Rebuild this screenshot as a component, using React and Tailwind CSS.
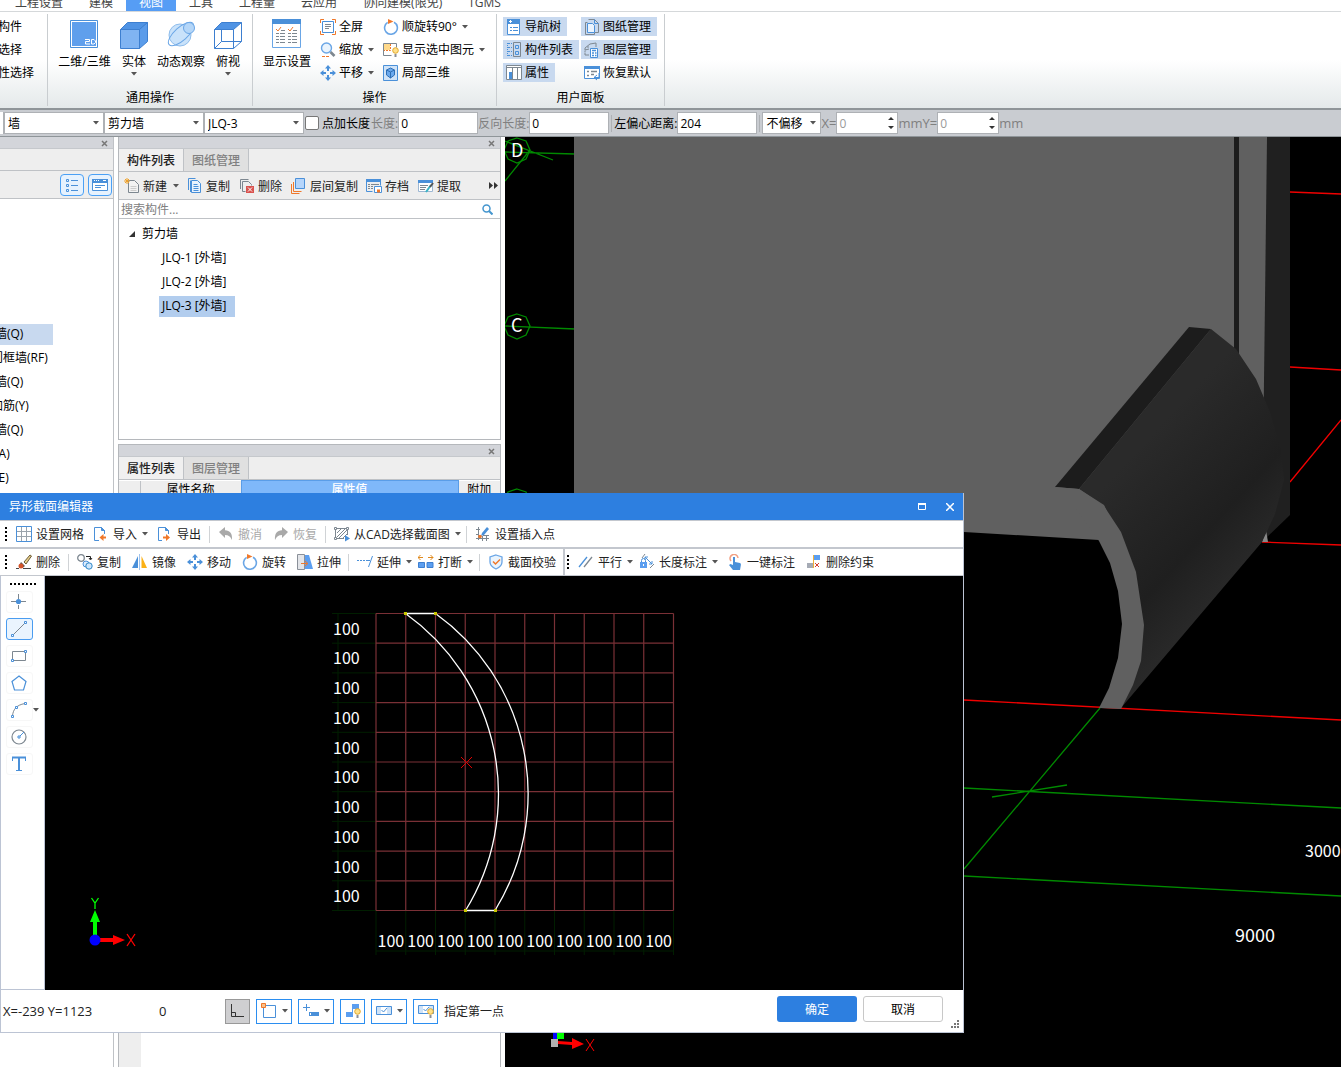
import React, { useState } from 'react';

const BLUE = '#4a90d9';
const GRAY = '#7d8790';
const ORANGE = '#f0782a';

const menuTabs = ['工程设置', '建模', '视图', '工具', '工程量', '云应用', '协同建模(限免)', 'TGMS'];

const navItems = [
  { text: '墙(Q)', shift: '-ml-[5px]', active: true },
  { text: '门框墙(RF)', shift: '-ml-[9px]' },
  { text: '墙(Q)', shift: '-ml-[5px]' },
  { text: '加筋(Y)', shift: '-ml-[9px]' },
  { text: '墙(Q)', shift: '-ml-[5px]' },
  { text: '(A)', shift: '-ml-[5px]' },
  { text: '(E)', shift: '-ml-[5px]' },
];

const Svg = ({ children }) => (
  <svg width="16" height="16" viewBox="0 0 16 16" fill="none" className="shrink-0">
    {children}
  </svg>
);

const Arrow = () => (
  <svg width="6" height="4" viewBox="0 0 6 4" className="shrink-0">
    <path d="M0 0h6L3 3.5z" fill="#555" />
  </svg>
);

const BulbShape = () => (
  <>
    <circle cx="12.5" cy="8.5" r="2.8" fill="#ffe08a" stroke="#e0a82e" />
    <path d="M11.5 12h2v3h-2z" fill="#8a8f98" />
  </>
);

const icons = {
  full: (
    <Svg>
      <path d="M.5 4V.5H4M12 .5h3.5V4M15.5 12v3.5H12M4 15.5H.5V12" stroke={ORANGE} />
      <path d="M2.5 2.5h11v11h-11z" stroke={BLUE} />
      <path d="M5 5.5h6M5 7.5h6M5 9.5h4" stroke={GRAY} />
    </Svg>
  ),
  zoom: (
    <Svg>
      <circle cx="6.5" cy="6" r="5" fill="#eaf4fd" stroke="#6aa6e6" strokeWidth="1.4" />
      <path d="M10.5 10l4 4" stroke={GRAY} strokeWidth="2.6" />
      <path d="M2 14.5h7" stroke={ORANGE} strokeDasharray="3 1" />
    </Svg>
  ),
  move: (
    <Svg>
      <path d="M8 3v3M8 10v3M3 8h3M10 8h3" stroke={BLUE} strokeWidth="2" />
      <path d="M8 0l3 3.5H5zM8 16l3-3.5H5zM0 8l3.5-3v6zM16 8l-3.5-3v6z" fill={BLUE} />
    </Svg>
  ),
  rotate: (
    <Svg>
      <path d="M11 3.2A6.4 6.4 0 1 1 4.6 3.4" stroke="#6aa6e6" strokeWidth="1.6" />
      <path d="M5 0l5.5 2.5L5 5z" fill={ORANGE} />
    </Svg>
  ),
  showSel: (
    <Svg>
      <path d="M.5 1.5h13v4M.5 1.5v12h8" stroke={GRAY} />
      <path d="M1 2h6v6H1z" fill="#ffd98a" />
      <path d="M7.5 2v6.5H1" stroke={ORANGE} strokeDasharray="2 1" />
      <BulbShape />
    </Svg>
  ),
  local3d: (
    <Svg>
      <path d="M.5.5h14v15H.5z" fill="#cfe3f8" stroke={BLUE} />
      <path d="M7.5 3l4 2v5l-4 3-4-3V5z" fill="#6aa9ee" stroke="#2f6fb5" />
      <path d="M3.5 5l4 2 4-2M7.5 7v6" stroke="#2f6fb5" />
    </Svg>
  ),
  navTree: (
    <Svg>
      <path d="M1.5.5h12v15h-12z" fill="#fff" stroke={BLUE} />
      <path d="M1 0h13v5H1z" fill={BLUE} />
      <path d="M3 2.5h3M4.5 1v3" stroke="#fff" />
      <path d="M4 8.5h2M7 8.5h5M4 11.5h2M7 11.5h5" stroke={BLUE} />
    </Svg>
  ),
  compList: (
    <Svg>
      <path d="M1.5 1v13" stroke={BLUE} strokeDasharray="1 1" />
      <path d="M2 1.5h4M2 5.5h4M2 9.5h4M2 13.5h4" stroke={BLUE} strokeDasharray="2 1" />
      <path d="M7.5.5h7v14h-7z" stroke={GRAY} />
      <path d="M9.5 3.5h3v3h-3zM9.5 9.5h3v3h-3z" stroke={BLUE} />
    </Svg>
  ),
  props: (
    <Svg>
      <path d="M.5.5h15v14H.5z" fill="#fff" stroke={GRAY} />
      <path d="M1 2.5h14M6.5 2v12M11.5 2v12" stroke={GRAY} />
      <path d="M3 7h3v7H3z" fill={BLUE} />
    </Svg>
  ),
  sheets: (
    <Svg>
      <path d="M3.5 3.5h-2v12h9v-2" stroke={GRAY} />
      <path d="M4.5.5h6l4 4v9h-4" stroke={GRAY} />
      <path d="M10.5.5v4h4" stroke={BLUE} />
      <path d="M3.500 4.5h5l2 2v7h-7z" fill="#eaf3fd" stroke={BLUE} />
    </Svg>
  ),
  layers: (
    <Svg>
      <path d="M1 6l5-4 6-1v4M1 6v2l4-1M1 11v2h4M1 8.500v2M4 4v2" stroke={GRAY} />
      <path d="M6.5 6.5h7v9h-7z" fill="#fff" stroke={BLUE} />
      <path d="M8 8.5h4M8 11h2M11 11h1.5M8 13.5h2M11 13.5h1.5" stroke={BLUE} strokeWidth="1.4" />
    </Svg>
  ),
  restore: (
    <Svg>
      <path d="M.5 1.5h15v12H.5z" fill="#fff" stroke={BLUE} />
      <path d="M0 1h16v3H0z" fill={BLUE} />
      <path d="M3 6.5h2M3 10.5h2M7 6.5h6M7 9.5h3" stroke={GRAY} strokeWidth="1.5" />
      <path d="M10 12.500h5V8M10 12.5l3-2.5M10 12.5l3 2.5" stroke={BLUE} />
    </Svg>
  ),
  create: (
    <Svg>
      <path d="M4.5 2.5h6l4 4v8h-10z" fill="#f3f3f3" stroke={GRAY} />
      <path d="M6.5 8.5h6M6.5 10.5h6M6.5 12.5h6" stroke="#ccc" />
      <path d="M1 1l4 4M5 1L1 5M3 0v6M0 3h6" stroke="#f0a22a" />
    </Svg>
  ),
  copyDoc: (
    <Svg>
      <path d="M1.5 12V.5h7M3.5 14V2.5" stroke={BLUE} />
      <path d="M4.5 2.5h6l3 3v9h-9z" fill="#eaf3fd" stroke={BLUE} />
      <path d="M6.5 6.5h4M6.5 8.5h5M6.5 10.5h5M6.5 12.5h5" stroke={BLUE} />
    </Svg>
  ),
  deleteDoc: (
    <Svg>
      <path d="M1.5 11V1.5h8M3.5 13.5v-10h6l3 3v1M3.5 13.5h3" stroke={GRAY} />
      <path d="M7 8h8v7H7z" fill="#d9534f" />
      <path d="M9 9.5l4 4M13 9.5l-4 4" stroke="#fff" />
    </Svg>
  ),
  floorCopy: (
    <Svg>
      <path d="M.5 6v9.500h8" stroke={ORANGE} />
      <path d="M2.5 4v9.500h8" stroke={ORANGE} />
      <path d="M4.500.5h9v10h-9z" fill="#b5d5fb" stroke={BLUE} />
    </Svg>
  ),
  archive: (
    <Svg>
      <path d="M.5 1.5h14v6M.5 1.5v12h6" stroke={BLUE} />
      <path d="M0 1h15v3H0z" fill={BLUE} />
      <path d="M2 6.5h2M5 6.5h8M2 8.5h2M5 8.5h2M2 10.5h2M5 10.5h2" stroke={GRAY} />
      <path d="M8.5 8.5h7v6h-7z" fill="#fff" stroke={BLUE} />
      <path d="M11 11.5h3v3h-3z" fill={ORANGE} />
    </Svg>
  ),
  extract: (
    <Svg>
      <path d="M.5 2.5h14v11H.5z" fill="#fff" stroke="#9db7d3" />
      <path d="M0 2h15v3H0z" fill={BLUE} />
      <path d="M2 7.5h8M2 9.5h6M2 11.5h5" stroke={GRAY} />
      <path d="M8 14l5-7" stroke="#3bb3c4" strokeWidth="2" />
      <path d="M12 9l3-4" stroke="#555" strokeWidth="2" />
    </Svg>
  ),
  grid: (
    <Svg>
      <path d="M5.5 0v16M10.5 0v16M0 5.5h16M0 10.5h16" stroke="#9aa3ab" />
      <path d="M.5.5h15v15H.5z" stroke={BLUE} />
    </Svg>
  ),
  importDoc: (
    <Svg>
      <path d="M6 14.5H1.5v-13h7l3 3V8" stroke={BLUE} />
      <path d="M8.5 1.500v3h3z" fill={BLUE} stroke={BLUE} />
      <path d="M13 11.5H9" stroke={ORANGE} strokeWidth="2" />
      <path d="M6.5 11.5l4-3.500v7z" fill={ORANGE} />
    </Svg>
  ),
  exportDoc: (
    <Svg>
      <path d="M5 14.5H1.5v-13h7l3 3V8" stroke={BLUE} />
      <path d="M8.5 1.500v3h3z" fill={BLUE} stroke={BLUE} />
      <path d="M6 11.5h4" stroke={ORANGE} strokeWidth="2" />
      <path d="M13 11.5L9 8v7z" fill={ORANGE} />
    </Svg>
  ),
  undo: (
    <Svg>
      <path d="M1 6l6-5v3.2c5 .3 7.5 3 7 9.8-1.500-3.500-3.500-5-7-5v3z" fill="#a9a9a9" />
    </Svg>
  ),
  redo: (
    <Svg>
      <path d="M15 6L9 1v3.2C4 4.5 1.500 7.2 2 14c1.500-3.500 3.500-5 7-5v3z" fill="#a9a9a9" />
    </Svg>
  ),
  cad: (
    <Svg>
      <path d="M2 2.5h11M1.5 3v9M13.500 3v6M2 12.5h8" stroke={GRAY} />
      <path d="M3 7l4-4M3 11l8-8M5 12l8-8M9 12l4-4" stroke={GRAY} />
      <path d="M.5 1.5h2v2h-2zM12.5 1.5h2v2h-2zM.5 11.5h2v2h-2z" fill="#fff" stroke={GRAY} />
      <path d="M11 9l5 3.5-5 3z" fill={BLUE} />
    </Svg>
  ),
  insertPt: (
    <Svg>
      <path d="M3.5 1v13M1 3.5h4M1 8.5h3M1 12.5h13M7.5 10v5M11.5 9v6M8 9.5h6" stroke={GRAY} />
      <path d="M7 7l5-6 2 2-5 6-3 1z" fill={BLUE} />
      <circle cx="5" cy="10.5" r="1.8" fill={ORANGE} />
    </Svg>
  ),
  brush: (
    <Svg>
      <path d="M8 8l6-7 1.5 1L10 10z" fill="#e8cf8a" stroke="#6b5a36" />
      <path d="M5 8l4 4-2 1.500L4 10z" fill="#555" />
      <circle cx="5" cy="12" r="2.5" fill="#d4542a" />
      <path d="M0 14.5h3M7 14.5h8" stroke="#444" />
    </Svg>
  ),
  copyShape: (
    <Svg>
      <circle cx="4" cy="4" r="3.3" stroke={GRAY} strokeWidth="1.3" />
      <path d="M9 2.5h4.5V5M12 4l1.500 2L15 4" stroke="#222" />
      <circle cx="9" cy="10" r="3" fill="#dcecfc" stroke={BLUE} />
      <circle cx="12" cy="12" r="3.200" fill="#cfe6fb" stroke="#2f88c8" />
    </Svg>
  ),
  mirror: (
    <Svg>
      <path d="M6 2v12H0z" fill={BLUE} />
      <path d="M9.5 2v12H15z" fill="#fbb116" />
      <path d="M7.5 0v16" stroke="#9fc4ee" />
    </Svg>
  ),
  stretch: (
    <Svg>
      <path d="M.5.5h7v15h-7z" fill="#e3e5e9" stroke="#8a9099" />
      <path d="M8 1h4l4 14H8z" fill="#5b9ef0" />
      <path d="M4 9.5h6M8 7l3 2.5L8 12" stroke={ORANGE} />
    </Svg>
  ),
  extend: (
    <Svg>
      <path d="M0 6.5h10" stroke={BLUE} strokeDasharray="2 1" />
      <path d="M10 6.5h3M15.5 2l-4 11" stroke={BLUE} />
    </Svg>
  ),
  breakIt: (
    <Svg>
      <path d="M.5 8.500h6v5h-6zM9 8.500h6v5H9z" fill="#5b9ef0" stroke="#3d7fd0" />
      <path d="M0 3.5h5M10 3.5h5M2.5 1L0 3.5 2.5 6M12.5 1L15 3.5 12.5 6" stroke="#e08a1e" />
    </Svg>
  ),
  shield: (
    <Svg>
      <path d="M8 1l6 2v5c0 3.5-2.500 5.500-6 7-3.500-1.500-6-3.500-6-7V3z" fill="#eaf4fd" stroke="#6aa6e6" strokeWidth="1.3" />
      <path d="M5 7.5L7.5 10 12 5.5" stroke={ORANGE} strokeWidth="1.5" />
    </Svg>
  ),
  parallel: (
    <Svg>
      <path d="M1 13L9 3" stroke={BLUE} strokeWidth="1.3" />
      <path d="M6 13l8-10" stroke={GRAY} strokeWidth="1.3" />
    </Svg>
  ),
  lockDim: (
    <Svg>
      <path d="M2.5 8V6.500a1.500 1.500 0 0 1 4 0V8" stroke={BLUE} />
      <path d="M1 8h7v6H1z" fill="#5b9ef0" />
      <path d="M4.5 10v2" stroke="#fff" />
      <path d="M6 3l7 7M6 3v3M6 3h3M13 10V7M13 10h-3" stroke={BLUE} />
      <path d="M3 4l3-4M11 14l4-4" stroke={GRAY} />
    </Svg>
  ),
  touch: (
    <Svg>
      <path d="M4 7a4 4 0 1 1 7-3" stroke="#f2a184" strokeWidth="1.5" />
      <path d="M6 3h2v5l5 1c1 .5 1 1 .8 2.5L13 16H6l-4-5 1.500-1L6 11z" fill={BLUE} />
    </Svg>
  ),
  delCons: (
    <Svg>
      <path d="M7 1h7v5H7z" fill="#5b9ef0" />
      <path d="M1 9h6v5H1z" fill="#a6abb5" />
      <path d="M7.5 1v13" stroke="#f0b03a" />
      <path d="M9 9l4 4M13 9l-4 4" stroke="#d83a2a" />
    </Svg>
  ),
};

const drawTools = [
  {
    id: '点',
    icon: (
      <>
        <path d="M7.500 0v5M7.500 11v4M0 7.500h5M10 7.500h5" stroke={GRAY} />
        <circle cx="7.500" cy="7.500" r="2.6" fill={BLUE} />
      </>
    ),
  },
  {
    id: '直线',
    icon: (
      <>
        <path d="M2 14L14 2" stroke={GRAY} />
        <path d="M.5 13.5h2v2h-2zM13.5.5h2v2h-2z" fill="#fff" stroke={BLUE} />
      </>
    ),
  },
  {
    id: '矩形',
    icon: (
      <>
        <path d="M1.5 3.5h13v9h-13z" stroke={GRAY} />
        <path d="M.5 11.5h2v2h-2zM13.5 2.5h2v2h-2z" fill="#fff" stroke={BLUE} />
      </>
    ),
  },
  { id: '多边形', icon: <path d="M8 1l7 5.5-2.500 8.500h-9L1 6.5z" stroke={BLUE} strokeWidth="1.2" /> },
  {
    id: '弧',
    arrow: true,
    icon: (
      <>
        <path d="M1.5 14C2 8 5 3 14 1.5" stroke={GRAY} />
        <path d="M.5 13.5h2v2h-2zM13.5.5h2v2h-2zM4.5 4.5h2v2h-2z" fill="#fff" stroke={BLUE} />
      </>
    ),
  },
  {
    id: '圆',
    icon: (
      <>
        <circle cx="8" cy="8" r="7" stroke={GRAY} strokeWidth="1.2" />
        <path d="M8 8l5-5" stroke={BLUE} />
        <path d="M7 7h2v2H7z" fill="#fff" stroke={BLUE} />
      </>
    ),
  },
  {
    id: '文字',
    icon: (
      <>
        <path d="M1.5 5V1.5h13V5M5 14.5h6" stroke={BLUE} />
        <path d="M1 1.5h14M8 1.5v13" stroke={BLUE} strokeWidth="2" />
      </>
    ),
  },
];

const BigButton = ({ label, width, arrow, children }) => (
  <button className={`flex flex-col items-center ${width}`}>
    <svg width="34" height="34" viewBox="0 0 34 34" fill="none">{children}</svg>
    <span className="mt-[3px] leading-4 whitespace-nowrap">{label}</span>
    {arrow && <span className="mt-[2px]"><Arrow /></span>}
  </button>
);

const RibbonItem = ({ icon, label, arrow, active, pad = 'pl-1' }) => (
  <button className={`flex items-center h-[19px] gap-[3px] whitespace-nowrap ${pad} ${active ? 'bg-[#c8d9ef] pr-[6px]' : ''}`}>
    {icons[icon]}
    <span>{label}</span>
    {arrow && <span className="ml-[2px]"><Arrow /></span>}
  </button>
);

const RibbonGroup = ({ label, width, children }) => (
  <div className={`flex flex-col justify-between border-r border-[#c9cdd0] my-[2px] ${width}`}>
    <div className="flex pt-[3px]">{children}</div>
    <div className="h-4 text-center leading-4">{label}</div>
  </div>
);

const Combo = ({ value, width, label }) => (
  <div className={`relative h-[22px] ${width}`}>
    <select
      aria-label={label}
      className="appearance-none w-full h-full bg-white border border-[#aeb1b5] pl-[3px] pt-[2px] outline-none leading-4"
    >
      <option>{value}</option>
    </select>
    <div className="absolute right-[5px] top-[9px] pointer-events-none"><Arrow /></div>
  </div>
);

const Field = ({ label, value, dim }) => (
  <label className={`flex items-center ${dim ? 'text-[#808080]' : 'text-black'}`}>
    <span className="whitespace-nowrap pt-[2px]">{label}</span>
    <input
      type="text"
      defaultValue={value}
      className="w-20 h-[22px] bg-white border border-[#aeb1b5] pl-[2px] text-black outline-none"
    />
  </label>
);

const Spin = ({ label, value }) => (
  <label className="flex items-center text-[#808080]">
    <span className="whitespace-nowrap text-[13px] pt-[2px]">{label}</span>
    <span className="relative">
      <input
        type="text"
        defaultValue={value}
        className="block w-[62px] h-[22px] bg-white border border-[#aeb1b5] pl-[2px] text-[#9a9a9a] outline-none"
      />
      <svg width="6" height="14" viewBox="0 0 6 14" className="absolute right-1 top-1">
        <path d="M0 4h6L3 1zM0 10h6l-3 3z" fill="#333" />
      </svg>
    </span>
  </label>
);

const PanelHead = () => (
  <div className="h-3 bg-[#d3d5da] border-b border-[#c5c8cc] flex justify-end items-end pr-[5px] pb-[1px]">
    <button aria-label="关闭">
      <svg width="7" height="7" viewBox="0 0 7 7" className="block">
        <path d="M1 1l5 5M6 1L1 6" stroke="#777" strokeWidth="1.5" />
      </svg>
    </button>
  </div>
);

const PanelTabs = ({ tabs }) => (
  <div className="flex h-[23px] border-b border-[#bfc2c6] bg-[#eeeeee]">
    {tabs.map((t, i) => (
      <button
        key={t}
        className={`w-[65px] pt-[2px] border-r border-[#bfc2c6] font-medium ${i === 0 ? 'bg-[#f0f0f0] text-[#222]' : 'bg-[#e0e0e0] text-[#808080]'}`}
      >
        {t}
      </button>
    ))}
  </div>
);

const PanelTool = ({ icon, label, arrow, width }) => (
  <button className={`flex items-center gap-[3px] whitespace-nowrap shrink-0 text-[#222] ${width}`}>
    {icons[icon]}
    <span className="pt-[2px]">{label}</span>
    {arrow && <span className="ml-[3px]"><Arrow /></span>}
  </button>
);

const Tool = ({ icon, label, arrow, disabled, width }) => (
  <button
    disabled={disabled}
    className={`flex items-center gap-1 whitespace-nowrap shrink-0 h-full ${width} ${disabled ? 'text-[#a9a9a9]' : 'text-[#222]'}`}
  >
    {icons[icon]}
    <span className="pt-[2px]">{label}</span>
    {arrow && <span className="ml-[1px]"><Arrow /></span>}
  </button>
);

const Sep = () => (
  <div className="w-[9px] shrink-0 h-[17px]"><div className="w-px h-full bg-[#d0d3d6]" /></div>
);

const Grip = () => <div className="h-[14px] border-l-2 border-dotted border-black shrink-0 w-[11px]" />;

const Ribbon = () => (
  <header className="shrink-0">
    <nav className="flex items-end h-3 overflow-hidden bg-white pl-[2px] border-b border-[#d5d8da]">
      {menuTabs.map((t) => (
        <button
          key={t}
          className={`px-[13px] h-4 leading-4 whitespace-nowrap ${t === '视图' ? 'bg-[#569df5] text-white' : 'text-[#444]'}`}
        >
          {t}
        </button>
      ))}
    </nav>
    <div className="flex h-[98px] bg-linear-to-b from-white from-50% to-[#e4e9ea] border-b-2 border-[#8f9599]">
      <RibbonGroup width="w-12">
        <div className="flex flex-col gap-1 -ml-[2px]">
          {['构件', '选择', '性选择'].map((t) => (
            <button key={t} className="h-[19px] text-left whitespace-nowrap">{t}</button>
          ))}
        </div>
      </RibbonGroup>
      <RibbonGroup label="通用操作" width="w-[205px]">
        <div className="flex pl-2 items-start">
          <BigButton label="二维/三维" width="w-[57px]">
            <path d="M2.5 3.5h27v27h-27z" fill="#fff" stroke={BLUE} />
            <path d="M4 5h24v24H4z" fill="#5f9fec" />
            <path d="M17 22.500h4.500v2H17.500V27H22M23.500 22.500V27h2.500l1.500-1.500V24L26 22.500z" stroke="#fff" />
          </BigButton>
          <BigButton label="实体" arrow width="w-[42px]">
            <path d="M3.5 12.5h19v19h-19z" fill="#80b4f2" stroke="#3d7fd0" />
            <path d="M3.5 12.5l7-7h20l-8 7z" fill="#4f93e4" stroke="#3d7fd0" />
            <path d="M22.5 12.5l8-7v19l-8 7z" fill="#5b9cea" stroke="#3d7fd0" />
          </BigButton>
          <BigButton label="动态观察" width="w-[52px]">
            <circle cx="16" cy="18" r="11" fill="#c9e2fa" stroke="#8fbdec" />
            <ellipse cx="17" cy="17" rx="16" ry="6.5" transform="rotate(-42 17 17)" stroke="#6aa6e6" />
            <circle cx="25" cy="11" r="5.5" fill="#b4d6f8" stroke="#6aa6e6" />
          </BigButton>
          <BigButton label="俯视" arrow width="w-[42px]">
            <path d="M3.5 12.5h19v19h-19zM22.5 31.5l8-7v-19M10.5 12v12.5h20M3.5 31.5l7-7" stroke="#3d7fd0" />
            <path d="M3.5 12.5l7-7h20l-8 7z" fill="#4f93e4" stroke="#3d7fd0" />
          </BigButton>
        </div>
      </RibbonGroup>
      <RibbonGroup label="操作" width="w-[244px]">
        <div className="pl-[6px]">
          <BigButton label="显示设置" width="w-14">
            <path d="M2.5 3.5h28v27h-28z" fill="#fff" stroke="#6aa6e6" />
            <path d="M2 2h29v5H2z" fill={BLUE} />
            <path d="M6 16.5h9M6 19.5h9M6 22.5h9M6 25.5h9M18 16.5h9M18 19.5h9M18 22.5h9M18 25.5h9" stroke={GRAY} strokeDasharray="3 1 8" />
            <path d="M6 12l2 2 3-4M18 12l2 2 3-4" stroke={ORANGE} />
            <path d="M11 13.5h4M23 13.5h4" stroke={GRAY} />
          </BigButton>
        </div>
        <div className="flex flex-col gap-1 w-[63px] ml-[1px]">
          <RibbonItem icon="full" label="全屏" />
          <RibbonItem icon="zoom" label="缩放" arrow />
          <RibbonItem icon="move" label="平移" arrow />
        </div>
        <div className="flex flex-col gap-1">
          <RibbonItem icon="rotate" label="顺旋转90°" arrow />
          <RibbonItem icon="showSel" label="显示选中图元" arrow />
          <RibbonItem icon="local3d" label="局部三维" />
        </div>
      </RibbonGroup>
      <RibbonGroup label="用户面板" width="w-[168px]">
        <div className="flex flex-col gap-1 items-start pl-[6px] w-[84px]">
          <RibbonItem icon="navTree" label="导航树" active pad="pl-[3px]" />
          <RibbonItem icon="compList" label="构件列表" active pad="pl-[3px]" />
          <RibbonItem icon="props" label="属性" active pad="pl-[3px]" />
        </div>
        <div className="flex flex-col gap-1 items-start">
          <RibbonItem icon="sheets" label="图纸管理" active pad="pl-[3px]" />
          <RibbonItem icon="layers" label="图层管理" active pad="pl-[3px]" />
          <RibbonItem icon="restore" label="恢复默认" pad="pl-[3px]" />
        </div>
      </RibbonGroup>
    </div>
    <div className="flex items-center h-[27px] bg-[#c9ccd1] border-b border-[#8f9599]">
      <div className="w-1 h-[22px] bg-white border-r border-[#aeb1b5]" />
      <Combo value="墙" label="类型" width="w-[100px]" />
      <Combo value="剪力墙" label="构件类型" width="w-[100px]" />
      <Combo value="JLQ-3" label="构件" width="w-[100px]" />
      <label className="flex items-center gap-[3px] pl-[1px] w-[67px] whitespace-nowrap">
        <input type="checkbox" className="appearance-none size-[14px] shrink-0 bg-white border border-[#777] rounded-[2px]" />
        <span className="pt-[2px]">点加长度</span>
      </label>
      <Field label="长度:" value="0" dim />
      <Field label="反向长度:" value="0" dim />
      <div className="w-px h-[17px] bg-[#aeb1b5] mx-[2px]" />
      <Field label="左偏心距离:" value="204" />
      <div className="w-px h-[17px] bg-[#aeb1b5] mx-[2px]" />
      <Combo value="不偏移" label="偏移" width="w-[59px]" />
      <Spin label="X=" value="0" />
      <Spin label="mmY=" value="0" />
      <span className="text-[13px] text-[#808080] pt-[2px]">mm</span>
    </div>
  </header>
);

const NavPanel = () => (
  <aside className="w-[114px] shrink-0 border-r border-[#bfc2c6] bg-white overflow-hidden">
    <PanelHead />
    <div className="h-[22px] bg-[#eeeeee] border-b border-[#bfc2c6]" />
    <div className="flex justify-end items-center gap-1 h-7 bg-[#eeeeee] border-b border-[#bfc2c6] pr-[1px]">
      <button aria-label="列表" className="w-6 h-[22px] flex items-center justify-center rounded-sm border border-[#4aa0f5] bg-[#e6f2fe]">
        <Svg>
          <path d="M2.5 2.5h2v2h-2zM2.5 7.5h2v2h-2zM2.5 12.5h2v2h-2zM7 3.5h7M7 8.5h7M7 13.5h7" stroke={BLUE} />
        </Svg>
      </button>
      <button aria-label="窗口" className="w-6 h-[22px] flex items-center justify-center rounded-sm border border-[#4aa0f5] bg-[#e6f2fe]">
        <Svg>
          <path d="M.5 2.5h15v11H.5z" fill="#fff" stroke={BLUE} />
          <path d="M0 2h16v4H0z" fill={BLUE} />
          <path d="M2 3.5h1M4 3.5h1M6 3.5h1M11 3.5h3" stroke="#fff" />
          <path d="M3 8.5h10M3 10.5h6" stroke={BLUE} />
        </Svg>
      </button>
    </div>
    <ul className="pt-[123px]">
      {navItems.map((n, i) => (
        <li key={i} className="h-6 flex items-center">
          <a href="#nav" className={`flex items-center h-[21px] ${n.active ? 'bg-[#c8d9ef] w-[53px]' : ''}`}>
            <span className={`whitespace-nowrap ${n.shift}`}>{n.text}</span>
          </a>
        </li>
      ))}
    </ul>
  </aside>
);

const ComponentPanel = () => {
  const [current, setCurrent] = useState('JLQ-3 [外墙]');

  return (
    <section className="border border-t-0 border-[#b5b8bc] bg-white">
      <PanelHead />
      <PanelTabs tabs={['构件列表', '图纸管理']} />
      <div className="flex items-center h-7 bg-[#eeeeee] border-b border-[#bfc2c6] pl-[5px]">
        <PanelTool icon="create" label="新建" arrow width="w-[63px]" />
        <PanelTool icon="copyDoc" label="复制" width="w-[52px]" />
        <PanelTool icon="deleteDoc" label="删除" width="w-[52px]" />
        <PanelTool icon="floorCopy" label="层间复制" width="w-[75px]" />
        <PanelTool icon="archive" label="存档" width="w-[52px]" />
        <PanelTool icon="extract" label="提取" width="w-[71px]" />
        <svg width="9" height="7" viewBox="0 0 9 7">
          <path d="M0 0l4 3.5L0 7zM5 0l4 3.5L5 7z" fill="#333" />
        </svg>
      </div>
      <div className="flex items-center h-[19px] border-b border-[#bfc2c6] pl-[2px] pr-[7px]">
        <input
          type="text"
          aria-label="搜索构件"
          placeholder="搜索构件..."
          className="flex-1 pt-[2px] outline-none placeholder:text-[#808080]"
        />
        <svg width="11" height="11" viewBox="0 0 11 11" fill="none">
          <circle cx="4.5" cy="4.5" r="3.5" stroke="#4596cf" strokeWidth="1.5" />
          <path d="M7 7l3.5 3.5" stroke="#4596cf" strokeWidth="2" />
        </svg>
      </div>
      <div className="h-[220px] pt-[3px]">
        <div className="flex items-center h-6 pl-[10px] gap-[7px]">
          <svg width="6" height="6" viewBox="0 0 6 6"><path d="M6 0v6H0z" fill="#333" /></svg>
          剪力墙
        </div>
        {['JLQ-1 [外墙]', 'JLQ-2 [外墙]', 'JLQ-3 [外墙]'].map((name) => (
          <div key={name} className="h-6 pl-10 flex items-center">
            <button
              onClick={() => setCurrent(name)}
              className={`h-[21px] w-[76px] pl-[3px] text-left whitespace-nowrap ${current === name ? 'bg-[#b2cdee]' : ''}`}
            >
              {name}
            </button>
          </div>
        ))}
      </div>
    </section>
  );
};

const PropertyPanel = () => (
  <section className="flex-1 flex flex-col mt-1 border border-b-0 border-[#b5b8bc] bg-white">
    <PanelHead />
    <PanelTabs tabs={['属性列表', '图层管理']} />
    <table className="w-full table-fixed">
      <thead>
        <tr className="h-[18px] leading-4 bg-[#eeeeee]">
          <th className="w-[21px]"></th>
          <th className="w-[101px] font-normal border-l border-[#bfc2c6]">属性名称</th>
          <th className="w-[217px] font-medium bg-[#7fb8fa] text-white border border-[#5a9de8]">属性值</th>
          <th className="font-normal">附加</th>
        </tr>
      </thead>
    </table>
    <div className="flex-1 w-[22px] bg-[#eeeeee]" />
  </section>
);

const Viewport3D = () => (
  <main className="flex-1 bg-black ml-1 min-w-0">
    <svg className="block w-full h-full" viewBox="505 137 836 930" preserveAspectRatio="xMinYMin slice" fill="none">
      <defs>
        <linearGradient id="barrel" x1="1110" y1="480" x2="1240" y2="600" gradientUnits="userSpaceOnUse">
          <stop offset="0" stopColor="#2a2a2a" />
          <stop offset="0.6" stopColor="#1f1f1f" />
          <stop offset="1" stopColor="#2c2c2c" />
        </linearGradient>
      </defs>
      <g stroke="#008a00" strokeWidth="1.3">
        <path d="M505 152l70 2M505 141l48 19M530 150l-25 31M505 326l70 3" />
        <path d="M517 138l9 3 4 9-4 9-9 4-9-4-4-9 4-9zM517 314l9 3 4 9-4 9-9 4-9-4-4-9 4-9zM517 489l9 3 4 9-4 9-9 4-9-4-4-9 4-9z" />
        <path d="M964 788l377 20M964 876l377 20M1100 708L964 869M992 797l75-12" />
      </g>
      <path d="M1290 192l51 2M1290 367l51 3M1290 482l51-62M1262 542l79 3M964 700l377 20" stroke="#f00000" strokeWidth="1.3" />
      <path d="M574 137H1235V360L1110 500L1099 540L964 532L574 510z" fill="#606060" />
      <path d="M1234 137h5v230h-5z" fill="#1c1c1c" />
      <path d="M1239 137h28v263h-28z" fill="#606060" />
      <path d="M1267 137h23v378l-28 27z" fill="#202020" />
      <path d="M1262 542l4-12 2 12z" fill="#888" />
      <path
        d="M1079 489L1211 329L1236 349L1256 379L1270 412L1281 450L1284 480L1275 514L1262 542L1121 708L1140 630L1130 560L1104 505z"
        fill="url(#barrel)"
      />
      <path d="M1189 327l22 2-132 160-24-2z" fill="#1c1c1c" />
      <path
        d="M1055 487L1079 489L1104 506L1121 532L1136 572L1144 625L1141 661L1133 685L1121 709L1099 708L1109 688L1118 658L1122 624L1118 591L1110 563L1099 541L1077 510z"
        fill="#606060"
      />
      <g fill="#fff" fontSize="16" className="font-['Noto_Sans_CJK_SC',sans-serif]">
        <text x="511" y="157" fontSize="18">D</text>
        <text x="511" y="332" fontSize="18">C</text>
        <text x="1305" y="857">3000</text>
        <text x="1235" y="942" fontSize="18">9000</text>
      </g>
      <path d="M553 1025h4v14h-4z" fill="#00f" />
      <path d="M557 1025h7v14h-7z" fill="#0f0" />
      <path d="M551 1039h7v8h-7z" fill="#b0b0b0" />
      <path d="M558 1041l14 1v-4l12 6-12 5v-4l-14-1z" fill="#f00" />
      <path d="M586 1039l8 12M594 1039l-8 12" stroke="#f00" />
    </svg>
  </main>
);

const steps = [0, 1, 2, 3, 4, 5, 6, 7, 8, 9];
const lines = [...steps, 10];

const SectionCanvas = () => (
  <svg className="flex-1 min-w-0 h-full bg-black" viewBox="45 576 918 414" preserveAspectRatio="xMinYMin slice" fill="none">
    <g stroke="#001e00">
      <path d="M338 613v298M376 951h298" />
      {lines.map((i) => (
        <path key={i} d={`M332 ${613.5 + i * 29.7}h44M${376 + i * 29.75} 911v44`} />
      ))}
    </g>
    <g stroke="#7a3036" strokeWidth="1.2">
      {lines.map((i) => (
        <path key={i} d={`M376 ${613.5 + i * 29.7}h297.5M${376 + i * 29.75} 613.5v297`} />
      ))}
    </g>
    <path
      d="M405.5 613.5A222 222 0 0 1 465.5 910.5H495A222 222 0 0 0 435.5 613.5z"
      stroke="#fff"
      strokeWidth="1.3"
    />
    <path d="M404 612h3v3h-3zM434 612h3v3h-3zM464 909h3v3h-3zM494 909h3v3h-3z" fill="#c8c800" />
    <path d="M461 757l11 11M472 757l-11 11" stroke="#e00000" />
    <g fill="#fff" fontSize="16" className="font-['Noto_Sans_CJK_SC',sans-serif]">
      {steps.map((i) => (
        <React.Fragment key={i}>
          <text x="333" y={634.5 + i * 29.75}>100</text>
          <text x={377.5 + i * 29.75} y="946.5">100</text>
        </React.Fragment>
      ))}
    </g>
    <path d="M93 936v-14h-3l5-12 5 12h-3v14z" fill="#0f0" />
    <path d="M98 938h15v-3l12 5-12 5v-3H98z" fill="#f00" />
    <circle cx="95" cy="940" r="5.5" fill="#00f" />
    <path d="M91.5 898l3.5 5 3.5-5M95 903v6" stroke="#0f0" strokeWidth="1.3" />
    <path d="M127 934l8 12M135 934l-8 12" stroke="#f00" strokeWidth="1.3" />
  </svg>
);

const FootButton = ({ label, arrow, pressed, children }) => (
  <button
    aria-label={label}
    className={`flex items-center justify-center gap-[5px] h-[25px] border ${arrow ? 'w-9' : 'w-[25px]'} ${pressed ? 'bg-[#cfcfd1] border-[#999]' : 'bg-white border-[#2b8ef0]'}`}
  >
    <Svg>{children}</Svg>
    {arrow && <Arrow />}
  </button>
);

const SectionEditor = () => {
  const [tool, setTool] = useState('直线');

  return (
    <div role="dialog" className="absolute left-0 top-[493px] w-[964px] h-[540px] flex flex-col bg-white border-b border-r border-[#bcc4d4]">
      <div className="flex items-center h-[27px] shrink-0 bg-[#2d7fe0] text-white pl-[9px] pr-[9px]">
        <span className="flex-1">异形截面编辑器</span>
        <button aria-label="最大化" className="mr-5">
          <svg width="8" height="7" viewBox="0 0 8 7" fill="none">
            <path d="M.5.5h7v6h-7z" stroke="#fff" /><path d="M0 1h8" stroke="#fff" strokeWidth="2" />
          </svg>
        </button>
        <button aria-label="关闭">
          <svg width="8" height="8" viewBox="0 0 8 8"><path d="M0 0l8 8M8 0L0 8" stroke="#fff" strokeWidth="1.5" /></svg>
        </button>
      </div>
      <div className="flex items-center h-[29px] shrink-0 border-t border-b-2 border-[#c3c7ce] pl-[5px]">
        <Grip />
        <Tool icon="grid" label="设置网格" width="w-[77px]" />
        <Tool icon="importDoc" label="导入" arrow width="w-16" />
        <Tool icon="exportDoc" label="导出" width="w-[52px]" />
        <Sep />
        <Tool icon="undo" label="撤消" disabled width="w-[55px]" />
        <Tool icon="redo" label="恢复" disabled width="w-[52px]" />
        <Sep />
        <Tool icon="cad" label="从CAD选择截面图" arrow width="w-[132px]" />
        <Sep />
        <Tool icon="insertPt" label="设置插入点" width="w-20" />
      </div>
      <div className="flex items-center h-[27px] shrink-0 border-b border-[#c3c7ce] pl-[5px]">
        <Grip />
        <Tool icon="brush" label="删除" width="w-[52px]" />
        <Sep />
        <Tool icon="copyShape" label="复制" width="w-[55px]" />
        <Tool icon="mirror" label="镜像" width="w-[55px]" />
        <Tool icon="move" label="移动" width="w-[55px]" />
        <Tool icon="rotate" label="旋转" width="w-[55px]" />
        <Tool icon="stretch" label="拉伸" width="w-[51px]" />
        <Sep />
        <Tool icon="extend" label="延伸" arrow width="w-[61px]" />
        <Tool icon="breakIt" label="打断" arrow width="w-[61px]" />
        <Sep />
        <Tool icon="shield" label="截面校验" width="w-[75px]" />
        <div className="w-[2px] h-full bg-[#c3c7ce] mr-[2px]" />
        <Grip />
        <Tool icon="parallel" label="平行" arrow width="w-[61px]" />
        <Tool icon="lockDim" label="长度标注" arrow width="w-[88px]" />
        <Tool icon="touch" label="一键标注" width="w-[79px]" />
        <Tool icon="delCons" label="删除约束" width="w-[79px]" />
      </div>
      <div className="flex flex-1 min-h-0">
        <div className="w-[45px] shrink-0 border-l border-r border-b border-[#bcc4d4] pt-[7px] pl-[5px]">
          <div className="ml-1 mb-[3px] w-[26px] border-t-2 border-dotted border-black" />
          {drawTools.map((d) => (
            <div key={d.id} className="flex items-center h-[27px]">
              <button
                aria-label={d.id}
                onClick={() => setTool(d.id)}
                className={`w-[27px] h-[22px] shrink-0 flex items-center pl-1 rounded-[3px] border ${tool === d.id ? 'border-[#4a9cf0] bg-[#eaf4fe]' : 'border-[#f7f7f7]'}`}
              >
                <Svg>{d.icon}</Svg>
              </button>
              {d.arrow && <Arrow />}
            </div>
          ))}
        </div>
        <SectionCanvas />
      </div>
      <div className="flex items-center h-[42px] shrink-0 border-l border-[#bcc4d4] pl-[2px] text-[#222]">
        <span className="w-[156px] text-[13px] pt-[2px]">X=-239 Y=1123</span>
        <span className="w-[66px] text-[13px] pt-[2px]">0</span>
        <div className="flex items-center gap-[6px]">
          <FootButton label="正交" pressed>
            <path d="M1.5 1v12.5H14M1.5 9.5h4v4" stroke="#333" />
          </FootButton>
          <FootButton label="捕捉" arrow>
            <path d="M2.5 2.5h12v12h-12z" stroke={BLUE} />
            <path d="M.5.5h4v4h-4z" fill="#f9c08a" stroke={ORANGE} />
          </FootButton>
          <FootButton label="动态输入" arrow>
            <path d="M0 4.5h7M3.5 1v7" stroke={BLUE} />
            <path d="M6 9h10v4H6z" fill={BLUE} /><path d="M7.5 10v2" stroke="#fff" />
          </FootButton>
          <FootButton label="显示约束">
            <path d="M7 1h7v5H7zM1 9h6v5H1z" fill="#5b9ef0" />
            <path d="M7.5 1v13" stroke="#5b9ef0" />
            <BulbShape />
          </FootButton>
          <FootButton label="校验" arrow>
            <path d="M.5 3.5h15v8H.5z" fill="#cfe3f8" stroke={BLUE} />
            <path d="M5 4h6v7H5z" fill="#fff" />
            <path d="M5.5 7l2 2L11 5" stroke={BLUE} />
          </FootButton>
          <FootButton label="显示校验">
            <path d="M.5 2.5h15v8H.5z" fill="#cfe3f8" stroke={BLUE} />
            <path d="M5 3h6v7H5z" fill="#fff" />
            <path d="M5.5 6l2 2L11 4" stroke={BLUE} />
            <BulbShape />
          </FootButton>
          <span className="pt-[2px]">指定第一点</span>
        </div>
        <div className="flex-1" />
        <button className="w-20 h-[26px] mb-1 pt-[2px] rounded-[3px] bg-[#2d7fe0] text-white">确定</button>
        <button className="w-20 h-[26px] mb-1 pt-[2px] ml-[6px] rounded-[3px] border border-[#c8c8c8] bg-white text-black">取消</button>
        <svg width="8" height="8" viewBox="0 0 8 8" className="self-end mb-1 ml-2 mr-1">
          <path d="M0 6h2v2H0zM3 6h2v2H3zM6 6h2v2H6zM3 3h2v2H3zM6 3h2v2H6zM6 0h2v2H6z" fill="#777" />
        </svg>
      </div>
    </div>
  );
};

const App = () => (
  <div className="relative flex flex-col h-screen overflow-hidden bg-white text-black text-xs font-['Open_Sans','Noto_Sans_CJK_SC',sans-serif]">
    <Ribbon />
    <div className="flex flex-1 min-h-0">
      <NavPanel />
      <div className="flex flex-col w-[383px] shrink-0 ml-1">
        <ComponentPanel />
        <PropertyPanel />
      </div>
      <Viewport3D />
    </div>
    <SectionEditor />
  </div>
);

export default App;
